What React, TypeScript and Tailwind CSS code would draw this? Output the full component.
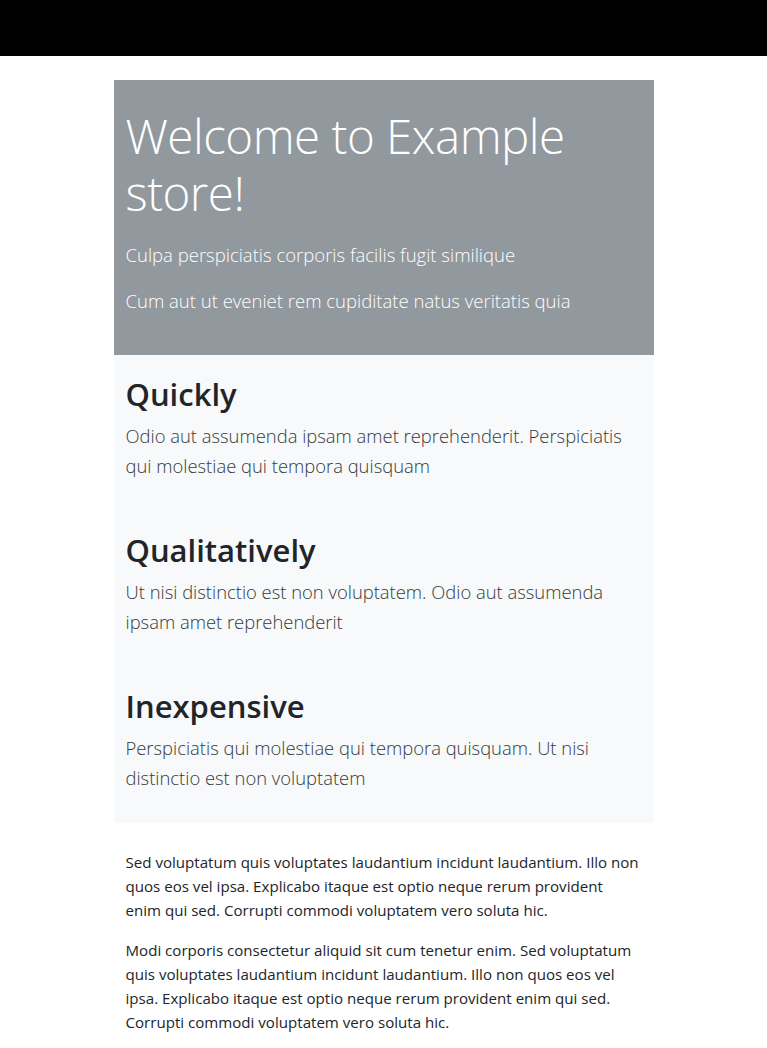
import React from "react";

const features = [
  {
    title: "Quickly",
    lines: ["Odio aut assumenda ipsam amet reprehenderit. Perspiciatis", "qui molestiae qui tempora quisquam"],
  },
  {
    title: "Qualitatively",
    lines: ["Ut nisi distinctio est non voluptatem. Odio aut assumenda", "ipsam amet reprehenderit"],
  },
  {
    title: "Inexpensive",
    lines: ["Perspiciatis qui molestiae qui tempora quisquam. Ut nisi", "distinctio est non voluptatem"],
  },
];

export default function App() {
  return (
    <div className="min-h-[1048px] bg-white text-[#212529]" style={{ fontFamily: '"Open Sans", "Noto Sans", sans-serif' }}>
      <div className="h-14 bg-black" />
      <main className="mx-auto mt-6 w-[540px]">
        <section className="bg-[#91989e] px-3 pt-[27px] pb-[39px] text-white">
          <h1 className="text-[47.5px] font-light leading-[1.2] tracking-[-0.5px]">Welcome to Example store!</h1>
          <p className="mt-[19px] text-[18.5px] font-light leading-[30px]">Culpa perspiciatis corporis facilis fugit similique</p>
          <p className="mt-4 text-[18.5px] font-light leading-[30px]">Cum aut ut eveniet rem cupiditate natus veritatis quia</p>
        </section>
        <section className="bg-[#f8f9fa] px-3">
          {features.map((f) => (
            <div key={f.title} className="h-[156px] pt-5">
              <h2 className="text-[31px] font-semibold leading-[38px] text-[#212529]">{f.title}</h2>
              <p className="mt-2 text-[18.4px] font-light leading-[30px] text-[#343a40]">
                {f.lines[0]}
                <br />
                {f.lines[1]}
              </p>
            </div>
          ))}
        </section>
        <section className="px-3 pt-[27px] text-[15.1px] leading-6 text-[#212529]">
          <p>
            Sed voluptatum quis voluptates laudantium incidunt laudantium. Illo non
            <br />
            quos eos vel ipsa. Explicabo itaque est optio neque rerum provident
            <br />
            enim qui sed. Corrupti commodi voluptatem vero soluta hic.
          </p>
          <p className="mt-4">
            Modi corporis consectetur aliquid sit cum tenetur enim. Sed voluptatum
            <br />
            quis voluptates laudantium incidunt laudantium. Illo non quos eos vel
            <br />
            ipsa. Explicabo itaque est optio neque rerum provident enim qui sed.
            <br />
            Corrupti commodi voluptatem vero soluta hic.
          </p>
        </section>
      </main>
    </div>
  );
}
